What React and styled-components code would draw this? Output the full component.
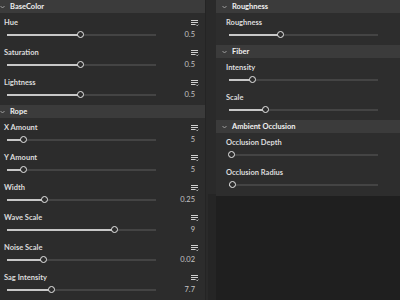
import React from "react";
import styled, { createGlobalStyle } from "styled-components";

const Global = createGlobalStyle`
  html, body { margin: 0; padding: 0; background: #1f1f1f; }
  body { width: 400px; height: 300px; overflow: hidden; font-family: Lato, "Noto Sans", sans-serif; }
  #root { width: 400px; height: 300px; }
`;

const Page = styled.div`
  width: 400px;
  height: 300px;
  display: flex;
  overflow: hidden;
  background: #282828;
`;

const LeftColumn = styled.div`
  width: 211px;
  margin-left: -6px;
  flex: none;
  background: #2c2c2c;
  border-right: 1px solid #242424;
  display: flex;
  flex-direction: column;
  gap: 2px;
`;

const Gutter = styled.div`
  width: 10px;
  flex: none;
  display: flex;
  flex-direction: column;
`;

const GutterTop = styled.div`
  height: 194px;
  background: #2a2a2a;
`;

const GutterBottom = styled.div`
  flex: 1;
  background: #252525;
  border-left: 2px solid #2a2a2a;
`;

const RightColumn = styled.div`
  flex: 1;
  display: flex;
  flex-direction: column;
`;

const RightPanel = styled.div`
  background: #2d2d2d;
  display: flex;
  flex-direction: column;
  gap: 2px;
  padding-bottom: 3px;
`;

const DarkArea = styled.div`
  flex: 1;
  background: #1f1f1f;
`;

const Section = styled.div`
  display: flex;
  flex-direction: column;
`;

const Header = styled.div`
  height: 13px;
  background: #3b3b3b;
  display: flex;
  align-items: center;
  padding-left: 6px;
  gap: 5px;
  color: #f0f0f0;
  font-size: 7.5px;
  font-weight: 700;
  line-height: 13px;
`;

const Row = styled.div`
  height: 30px;
  box-sizing: border-box;
  padding: 4px 6px 0 10px;
  display: flex;
  flex-direction: column;
`;

const LabelLine = styled.div`
  height: 12px;
  display: flex;
  align-items: center;
  justify-content: space-between;
`;

const Label = styled.span`
  color: #dcdcdc;
  font-size: 7.5px;
  font-weight: 700;
  line-height: 12px;
`;

const SliderLine = styled.div`
  height: 12px;
  display: flex;
  align-items: center;
  justify-content: space-between;
  padding-left: 3px;
`;

const Track = styled.div`
  position: relative;
  width: 149px;
  height: 2px;
  background: #444444;
`;

const Fill = styled.div`
  position: absolute;
  left: 0;
  top: 0;
  height: 2px;
  background: #c8c8c8;
`;

const Thumb = styled.div`
  position: absolute;
  top: 50%;
  width: 5px;
  height: 5px;
  margin-left: -4px;
  margin-top: -4px;
  border-radius: 50%;
  border: 1.5px solid #e8e8e8;
  background: #2c2c2c;
`;

const Value = styled.span`
  color: #c4c4c4;
  font-size: 7.5px;
  line-height: 12px;
  margin-right: 4px;
`;

const Chevron = () => (
  <svg width="5" height="4" viewBox="0 0 5 4">
    <path d="M0.5 1 L2.5 3 L4.5 1" fill="none" stroke="#a8a8a8" strokeWidth="0.9" />
  </svg>
);

const MenuIcon = () => (
  <svg width="8" height="7" viewBox="0 0 8 7">
    <rect x="0" y="0" width="7" height="1" fill="#cfcfcf" />
    <rect x="0" y="2" width="7" height="1" fill="#cfcfcf" />
    <rect x="0" y="4" width="4.5" height="1" fill="#cfcfcf" />
    <path d="M5 4.6 L6.2 5.8 L7.4 4.6" fill="none" stroke="#cfcfcf" strokeWidth="0.8" />
  </svg>
);

const Slider = ({ pos }) => (
  <Track>
    <Fill style={{ width: `${pos}px` }} />
    <Thumb style={{ left: `${pos}px` }} />
  </Track>
);

const Param = ({ label, pos, value }) => (
  <Row>
    <LabelLine>
      <Label>{label}</Label>
      {value !== undefined && <MenuIcon />}
    </LabelLine>
    <SliderLine>
      <Slider pos={pos} />
      {value !== undefined && <Value>{value}</Value>}
    </SliderLine>
  </Row>
);

const Group = ({ title, params }) => (
  <Section>
    <Header>
      <Chevron />
      <span>{title}</span>
    </Header>
    {params.map((p) => (
      <Param key={p.label} {...p} />
    ))}
  </Section>
);

const leftGroups = [
  {
    title: "BaseColor",
    params: [
      { label: "Hue", pos: 74, value: "0.5" },
      { label: "Saturation", pos: 74, value: "0.5" },
      { label: "Lightness", pos: 74, value: "0.5" },
    ],
  },
  {
    title: "Rope",
    params: [
      { label: "X Amount", pos: 17, value: "5" },
      { label: "Y Amount", pos: 17, value: "5" },
      { label: "Width", pos: 38, value: "0.25" },
      { label: "Wave Scale", pos: 108, value: "9" },
      { label: "Noise Scale", pos: 37, value: "0.02" },
      { label: "Sag Intensity", pos: 45, value: "7.7" },
    ],
  },
];

const rightGroups = [
  { title: "Roughness", params: [{ label: "Roughness", pos: 52 }] },
  {
    title: "Fiber",
    params: [
      { label: "Intensity", pos: 24 },
      { label: "Scale", pos: 37 },
    ],
  },
  {
    title: "Ambient Occlusion",
    params: [
      { label: "Occlusion Depth", pos: 3 },
      { label: "Occlusion Radius", pos: 4 },
    ],
  },
];

export default function App() {
  return (
    <>
      <Global />
      <Page>
        <LeftColumn>
          {leftGroups.map((g) => (
            <Group key={g.title} {...g} />
          ))}
        </LeftColumn>
        <Gutter>
          <GutterTop />
          <GutterBottom />
        </Gutter>
        <RightColumn>
          <RightPanel>
            {rightGroups.map((g) => (
              <Group key={g.title} {...g} />
            ))}
          </RightPanel>
          <DarkArea />
        </RightColumn>
      </Page>
    </>
  );
}
